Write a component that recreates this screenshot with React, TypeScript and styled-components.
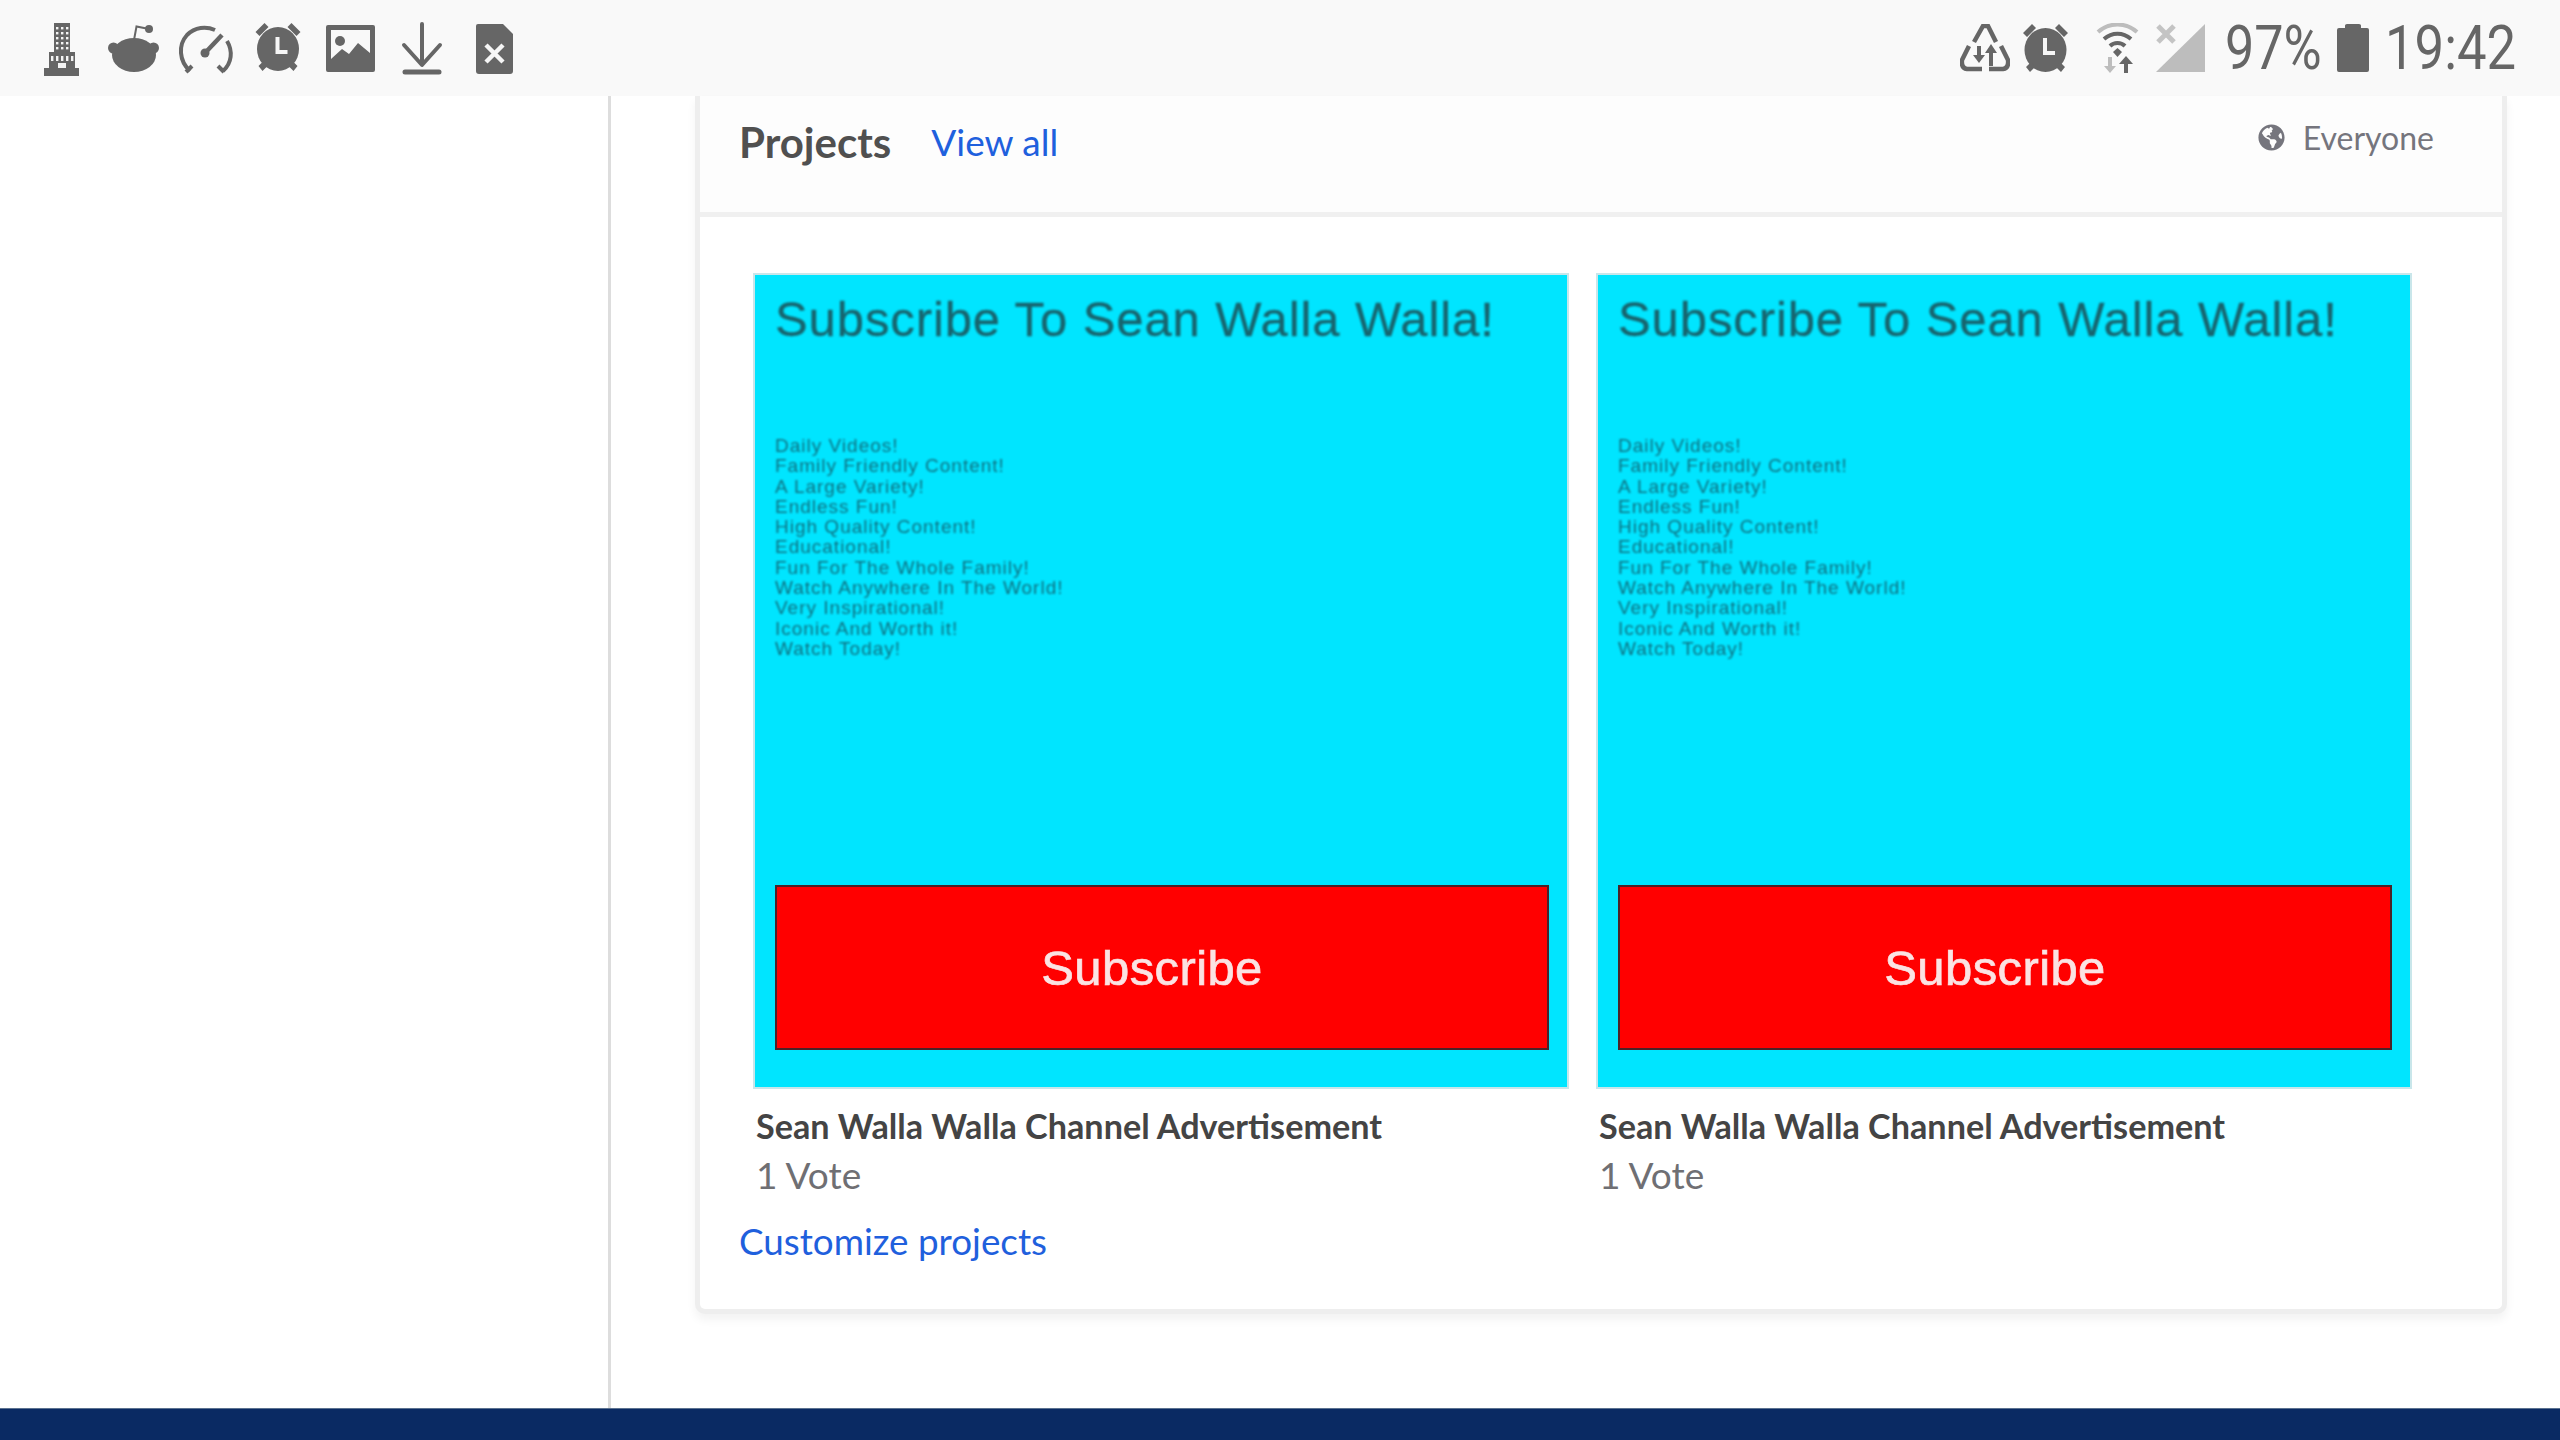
import React from 'react'
import styled, { createGlobalStyle } from 'styled-components'
import { FaGlobeAmericas } from 'react-icons/fa'

const GlobalStyle = createGlobalStyle`
  html, body {
    margin: 0;
    padding: 0;
    background: #fff;
  }
  body {
    font-family: Lato, "Open Sans", sans-serif;
  }
`

const Page = styled.div`
  width: 2560px;
  height: 1440px;
  display: flex;
  flex-direction: column;
  overflow: hidden;
`

const StatusBar = styled.div`
  flex: 0 0 96px;
  background: #f9f9f9;
  display: flex;
  justify-content: space-between;
  align-items: center;
  padding: 0 44px 0 26px;
  color: #666;
`

const StatusGroup = styled.div`
  display: flex;
  align-items: center;
`

const Glyph = styled.svg<{ $gap?: number }>`
  display: block;
  flex: none;
  margin-right: ${props => props.$gap || 0}px;
  fill: #666;
  stroke-width: 0;
`

const StatusText = styled.span<{ $width: number; $gap?: number; $scale: number }>`
  display: block;
  flex: none;
  width: ${props => props.$width}px;
  margin-right: ${props => props.$gap || 0}px;
  font-family: Roboto, sans-serif;
  font-size: 62px;
  line-height: 72px;
  color: #666;
  white-space: nowrap;
  transform: scaleX(${props => props.$scale});
  transform-origin: left center;
`

const Main = styled.div`
  flex: 1;
  min-height: 0;
  display: flex;
`

const Sidebar = styled.div`
  flex: 0 0 608px;
  border-right: 3px solid #ddd;
`

const Content = styled.div`
  flex: 1;
  padding: 0 53px 0 84px;
`

const Card = styled.section`
  height: 1218px;
  box-sizing: border-box;
  border: 5px solid #eee;
  border-top: none;
  border-radius: 0 0 10px 10px;
  box-shadow: 0 6px 10px rgba(0, 0, 0, 0.05);
  background: #fff;
`

const CardHeader = styled.header`
  height: 121px;
  box-sizing: border-box;
  border-bottom: 5px solid #f0f0f0;
  background: #fdfdfd;
  display: flex;
  align-items: flex-start;
  padding: 20px 68px 0 39px;
`

const CardTitle = styled.h2`
  margin: 0 40px 0 0;
  font-size: 42px;
  line-height: 52px;
  font-weight: 700;
  color: #505050;
`

const TextLink = styled.a`
  color: #1f60dd;
  font-size: 37px;
  line-height: 52px;
`

const Audience = styled.div`
  margin-left: auto;
  display: flex;
  align-items: center;
  gap: 18px;
  height: 42px;
  font-size: 32px;
  color: #75757d;
  svg {
    width: 27px;
    height: 27px;
  }
`

const CardBody = styled.div`
  padding: 56px 39px 0;
`

const ProjectGrid = styled.div`
  display: grid;
  grid-template-columns: 816px 816px;
  column-gap: 27px;
  margin-left: 14px;
`

const Project = styled.article`
  min-width: 0;
`

const Thumb = styled.div`
  width: 816px;
  height: 816px;
  box-sizing: border-box;
  border: 2px solid #c9e6ea;
  background: #00e5ff;
  display: flex;
  flex-direction: column;
  padding: 0 18px 37px 20px;
  font-family: "Liberation Sans", Arial, sans-serif;
`

const ThumbHeading = styled.div`
  margin-top: 16px;
  font-size: 49px;
  line-height: 56px;
  letter-spacing: 0.9px;
  color: #17646e;
  filter: blur(1px);
  -webkit-text-stroke: 0.3px #17646e;
  white-space: nowrap;
`

const ThumbList = styled.div`
  margin-top: 89px;
  font-size: 19px;
  line-height: 20.3px;
  letter-spacing: 1px;
  color: #0f7080;
  filter: blur(1.1px);
  white-space: pre-line;
`

const ThumbButton = styled.div`
  margin-top: auto;
  height: 165px;
  box-sizing: border-box;
  background: #ff0000;
  border: 2px solid #4b2228;
  filter: blur(0.7px);
  display: flex;
  align-items: center;
  justify-content: center;
  padding: 0 20px 0 0;
  font-size: 49px;
  letter-spacing: 0.4px;
  color: #fbe3e3;
  -webkit-text-stroke: 0.7px #fbe3e3;
`

const ProjectName = styled.div`
  margin: 12px 0 0 3px;
  font-size: 34.2px;
  line-height: 50px;
  font-weight: 700;
  color: #444;
  white-space: nowrap;
`

const ProjectVotes = styled.div`
  margin: 0 0 0 3px;
  font-size: 37px;
  line-height: 48px;
  color: #6f6f73;
`

const CustomizeLink = styled(TextLink)`
  display: block;
  margin-top: 17px;
  font-size: 36.8px;
  line-height: 50px;
`

const Footer = styled.footer`
  flex: 0 0 31px;
  background: #0a2a63;
  border-top: 1px solid #5b7290;
`

const thumbLines = `Daily Videos!
Family Friendly Content!
A Large Variety!
Endless Fun!
High Quality Content!
Educational!
Fun For The Whole Family!
Watch Anywhere In The World!
Very Inspirational!
Iconic And Worth it!
Watch Today!`

const BuildingIcon = () => (
  <Glyph width={72} height={72} viewBox="0 0 72 72">
    <rect x="28" y="11" width="16" height="30" />
    <rect x="23" y="40" width="26" height="17" />
    <rect x="18" y="56" width="35" height="8" />
    {[15, 20, 25, 30, 35].map(y =>
      [30, 35, 40].map(x => <rect key={`${x}-${y}`} x={x} y={y} width="2.4" height="2.4" fill="#f4f4f4" />)
    )}
    {[25, 30, 35, 40, 45].map(x => <rect key={x} x={x} y="44" width="2.4" height="5" fill="#f4f4f4" />)}
    <rect x="32" y="51" width="8" height="5" fill="#f4f4f4" />
  </Glyph>
)

const RedditIcon = () => (
  <Glyph width={72} height={72} viewBox="0 0 72 72">
    <ellipse cx="36" cy="43" rx="22" ry="17" />
    <circle cx="15.5" cy="36" r="5.5" />
    <circle cx="55.5" cy="36" r="5.5" />
    <path d="M36 28 L38.5 14.5 L51 17" fill="none" stroke="#666" strokeWidth="2" />
    <circle cx="51" cy="17" r="4" />
  </Glyph>
)

const GaugeIcon = () => (
  <Glyph width={72} height={72} viewBox="0 -1 72 72">
    <g fill="none" stroke="#666" strokeWidth="4">
      <path d="M20 58 C 9 48 8 32 17 22 C 25 14 36 13 45 17" />
      <path d="M16 59 L22 53" />
      <path d="M57 28 C 63 38 62 50 53 58" />
      <path d="M54 59 L48 53" />
      <path d="M35 40 L52 22" strokeWidth="4.5" />
    </g>
    <circle cx="35" cy="40" r="4.5" />
  </Glyph>
)

const AlarmShape = () => (
  <>
    <ellipse cx="23.5" cy="26" rx="21" ry="22" />
    <path d="M1 9 L10 0 L14 4 L5 13 Z M46 9 L37 0 L33 4 L42 13 Z" />
    <path d="M4 43 L9 38 L13 43 L8 48 Z M43 43 L38 38 L34 43 L39 48 Z" />
    <path d="M21 14 H25 V27 H33 V31 H21 Z" fill="#f6f6f6" />
  </>
)

const AlarmIcon = () => (
  <Glyph width={72} height={72} viewBox="-12.5 -11 72 72">
    <AlarmShape />
  </Glyph>
)

const ImageIcon = () => (
  <Glyph width={72} height={72} viewBox="0 0 72 72">
    <path
      fillRule="evenodd"
      d="M14 13 H59 Q61 13 61 15 V58 Q61 60 59 60 H14 Q12 60 12 58 V15 Q12 13 14 13 Z M17 18 V47 L28 37 L35 42 L44 31 L56 41 V18 Z"
    />
    <circle cx="26" cy="29" r="5" />
  </Glyph>
)

const DownloadIcon = () => (
  <Glyph width={72} height={72} viewBox="0 0 72 72">
    <g fill="none" stroke="#666" strokeLinecap="round" strokeLinejoin="round">
      <path d="M36 12 V52 M18 33 L36 53 L54 33" strokeWidth="4" />
      <path d="M19 60 H53" strokeWidth="5" />
    </g>
  </Glyph>
)

const SimErrorIcon = () => (
  <Glyph width={72} height={72} viewBox="0 0 72 72">
    <path d="M20 12 H45 L55 22 V59 Q55 62 52 62 H21 Q18 62 18 59 V14 Q18 12 20 12 Z" />
    <path d="M28 33 L45 50 M45 33 L28 50" fill="none" stroke="#f6f6f6" strokeWidth="4.5" />
  </Glyph>
)

const RecycleIcon = () => (
  <Glyph $gap={12} width={50} height={48} viewBox="0 0 50 48">
    <g fill="none" stroke="#666" strokeWidth="4.5">
      <path d="M14 18 L23 2 H28 L36 18" />
      <path d="M9 22 L2 36 Q1 44 7 45 H22" />
      <path d="M41 22 L48 36 Q49 44 43 45 H29" />
      <path d="M19 22 V34 M31 28 V42" strokeWidth="4" />
    </g>
    <path d="M13 31 H25 L19 39 Z M25 29 H37 L31 20 Z" />
  </Glyph>
)

const StatusAlarmIcon = () => (
  <Glyph $gap={27} width={47} height={49} viewBox="0 0 47 49">
    <AlarmShape />
  </Glyph>
)

const WifiIcon = () => (
  <Glyph $gap={17} width={43} height={50} viewBox="0 0 43 50">
    <g fill="none" strokeWidth="4">
      <path d="M2 9 C 13 -1 30 -1 41 9" stroke="#bdbdbd" />
      <path d="M8 16 C 16 9 27 9 35 16" stroke="#666" />
      <path d="M14 23 C 18 19 25 19 29 23" stroke="#666" />
    </g>
    <path d="M17 29 L21.5 25 L26 29 L21.5 34 Z" />
    <path d="M12 34 V43 H8 L14 50 L20 43 H16 V34 Z" fill="#bdbdbd" />
    <path d="M28 50 V41 H23 L30 33 L37 41 H32 V50 Z" />
  </Glyph>
)

const SignalIcon = () => (
  <Glyph $gap={20} width={49} height={48} viewBox="0 0 49 48">
    <path d="M49 0 V48 H0 Z" fill="#bdbdbd" />
    <path d="M2 2 L18 18 M18 2 L2 18" fill="none" stroke="#c4c4c4" strokeWidth="5" />
  </Glyph>
)

const BatteryIcon = () => (
  <Glyph $gap={16} width={32} height={48} viewBox="0 0 32 48">
    <path d="M8 4 V1.5 Q8 0 10 0 H22 Q24 0 24 1.5 V4 H30 Q32 4 32 6 V46 Q32 48 30 48 H2 Q0 48 0 46 V6 Q0 4 2 4 Z" />
  </Glyph>
)

const ProjectCard = () => (
  <Project>
    <Thumb>
      <ThumbHeading>Subscribe To Sean Walla Walla!</ThumbHeading>
      <ThumbList>{thumbLines}</ThumbList>
      <ThumbButton>Subscribe</ThumbButton>
    </Thumb>
    <ProjectName>Sean Walla Walla Channel Advertisement</ProjectName>
    <ProjectVotes>1 Vote</ProjectVotes>
  </Project>
)

const App = () => {
  return (
    <Page>
      <GlobalStyle />
      <StatusBar>
        <StatusGroup>
          <BuildingIcon />
          <RedditIcon />
          <GaugeIcon />
          <AlarmIcon />
          <ImageIcon />
          <DownloadIcon />
          <SimErrorIcon />
        </StatusGroup>
        <StatusGroup>
          <RecycleIcon />
          <StatusAlarmIcon />
          <WifiIcon />
          <SignalIcon />
          <StatusText $width={94} $gap={18} $scale={0.84}>97%</StatusText>
          <BatteryIcon />
          <StatusText $width={131} $scale={0.85}>19:42</StatusText>
        </StatusGroup>
      </StatusBar>
      <Main>
        <Sidebar />
        <Content>
          <Card>
            <CardHeader>
              <CardTitle>Projects</CardTitle>
              <TextLink>View all</TextLink>
              <Audience>
                <FaGlobeAmericas />
                Everyone
              </Audience>
            </CardHeader>
            <CardBody>
              <ProjectGrid>
                <ProjectCard />
                <ProjectCard />
              </ProjectGrid>
              <CustomizeLink>Customize projects</CustomizeLink>
            </CardBody>
          </Card>
        </Content>
      </Main>
      <Footer />
    </Page>
  )
}

export default App
